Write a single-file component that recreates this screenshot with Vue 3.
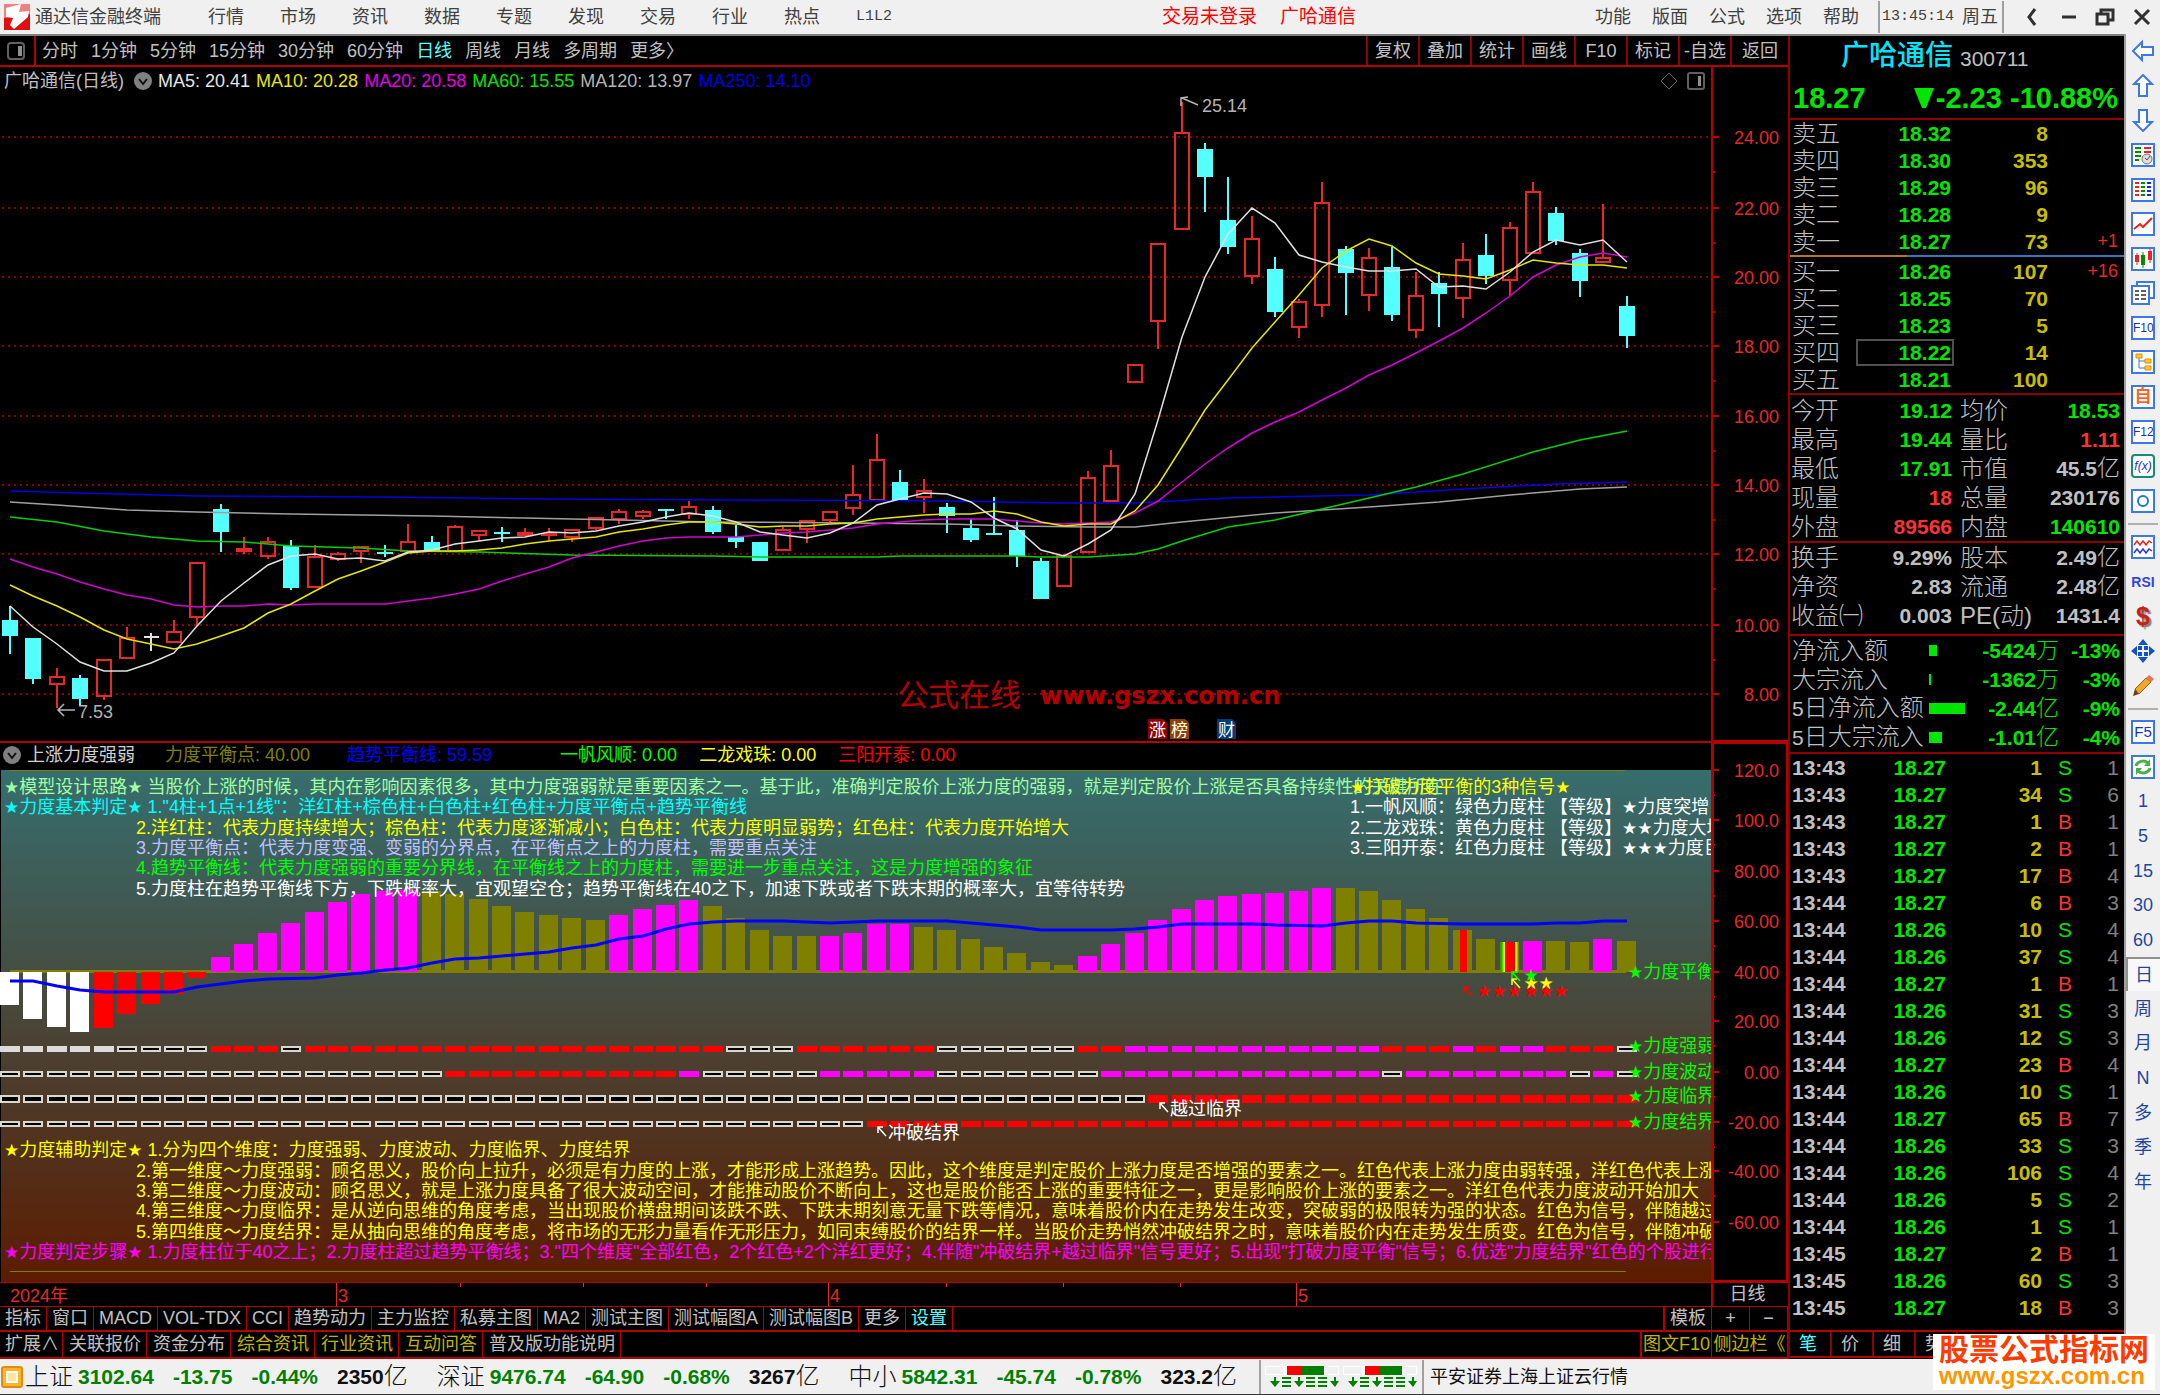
<script setup>
const menu = ['行情', '市场', '资讯', '数据', '专题', '发现', '交易', '行业', '热点', 'L1L2']
const sysMenu = ['功能', '版面', '公式', '选项', '帮助']
const periods = ['分时', '1分钟', '5分钟', '15分钟', '30分钟', '60分钟', '日线', '周线', '月线', '多周期', '更多〉']
const chartTools = ['复权', '叠加', '统计', '画线', 'F10', '标记', '-自选', '返回']

const STEP = 23.43
const cx = (i) => Math.round(10 + i * STEP)

// direction, high, body top, body bottom, low
const candleRows = `d 606 620 636 654|d 638 638 679 684|u 668 677 684 708|d 675 678 699 706|u 659 660 696 700|u 627 638 658 658|w 633 637 637 651|u 620 632 642 642|u 563 563 617 626|d 504 509 532 552
u 537 549 551 554|u 537 542 556 559|d 540 546 588 590|u 545 557 587 587|u 552 554 559 561|u 547 547 551 563|d 545 552 553 557|u 524 542 551 551|d 536 542 551 551|u 525 527 551 551
u 531 531 535 541|d 527 532 534 542|u 528 533 535 535|u 528 534 535 541|u 530 530 537 542|u 518 518 528 530|u 509 512 519 524|u 510 512 516 519|d 509 509 511 519|u 501 507 514 519
d 506 510 532 534|d 525 537 542 548|d 542 542 561 561|u 527 530 550 550|u 521 521 529 543|u 512 512 520 523|u 465 495 508 515|u 434 460 500 500|d 470 482 500 500|u 479 491 497 513
d 503 507 516 533|d 519 528 540 542|d 497 533 534 535|d 520 530 556 567|d 558 561 599 599|u 554 556 586 586|u 471 478 552 552|u 450 466 501 501|u 365 365 382 382|u 244 244 321 349
u 102 133 229 229|d 143 149 177 212|d 177 220 247 254|u 216 239 276 284|d 257 269 312 317|u 299 302 327 338|u 182 203 305 317|d 246 249 273 315|u 248 258 295 311|d 247 267 315 321
u 272 296 330 338|d 272 283 294 327|u 243 260 298 318|d 234 255 276 284|u 222 228 280 296|u 182 192 253 253|d 207 213 241 245|d 249 253 281 297|u 204 258 262 262|d 296 306 336 348`
const candles = candleRows.split(/[|\n]/).map((row, i) => {
  const [dir, high, top, bottom, low] = row.split(' ')
  return { x: cx(i), dir, high: +high, top: +top, bottom: +bottom, low: +low }
})

const dense = (list) => list.split(' ').map((y, i) => `${cx(i)},${y}`).join(' ')
const sparse = (list) => list.split(' ').map((p) => { const [i, y] = p.split(':'); return `${cx(+i)},${y}` }).join(' ')
const averages = [
  { color: '#0000e6', points: sparse('0:491 3:493 8:496 16:497 23:499 31:500 40:501 45:503 48:503 52:498 58:495 62:489 66:484 69:482') },
  { color: '#a0a0a0', points: sparse('0:502 2:505 5:510 8:512 12:514 18:516 22:518 26:520 30:522 36:523 40:524 43:526 46:527 48:527 50:522 54:513 58:507 61:502 64:495 67:489 69:487') },
  { color: '#00d200', points: sparse('0:517 2:522 4:531 6:537 8:541 10:542 12:546 15:548 17:551 20:552 24:555 30:556 32:557 37:557 38:556 43:556 44:557 46:557 48:554 49:549 50:541 52:527 54:520 56:509 58:498 60:487 62:474 65:452 67:440 69:431') },
  { color: '#d400d4', points: dense('559 567 574 582 589 595 599 605 607 606 606 604 605 604 604 604 604 601 598 594 589 581 574 567 558 552 546 541 538 537 537 537 535 533 532 530 528 524 522 520 519 519 519 521 523 524 523 522 513 501 482 464 448 433 422 412 400 388 375 365 353 341 328 313 296 277 265 257 253 257') },
  { color: '#e6e600', points: dense('585 596 606 617 630 639 644 649 644 636 628 613 604 591 579 571 562 553 551 551 550 548 544 541 539 537 532 529 525 522 522 524 527 526 526 524 523 519 517 515 514 514 511 514 522 526 524 524 511 485 447 410 380 348 322 295 268 251 239 246 263 274 276 279 270 260 263 265 265 268') },
  { color: '#e0e0e0', points: dense('606 627 644 662 671 671 663 653 626 601 583 565 556 554 559 558 561 552 550 544 541 538 537 532 533 531 526 522 517 513 516 522 532 535 538 533 523 505 499 493 494 502 518 529 550 556 544 530 494 420 337 277 234 208 223 255 262 267 271 271 269 287 286 289 272 252 240 245 240 262') },
]
const priceAxis = [[24, 137], [22, 208], [20, 277], [18, 346], [16, 416], [14, 485], [12, 554], [10, 625], [8, 694]].map(([v, y]) => ({ label: v.toFixed(2), y }))
const forceAxis = [['120.0', 770], ['100.0', 820], ['80.00', 871], ['60.00', 921], ['40.00', 972], ['20.00', 1021], ['0.00', 1072], ['-20.00', 1122], ['-40.00', 1171], ['-60.00', 1222]].map(([label, y]) => ({ label, y }))

const legend = [
  ['MA5: 20.41', '#e6e6e6'], ['MA10: 20.28', '#e6e600'], ['MA20: 20.58', '#e600e6'],
  ['MA60: 15.55', '#00e600'], ['MA120: 13.97', '#b4b4b4'], ['MA250: 14.10', '#0000e6'],
]
const forceLegend = [
  ['力度平衡点: 40.00', '#808000', 'lead'], ['趋势平衡线: 59.59', '#0000ff', 'lead'], ['一帆风顺: 0.00', '#00ff00', 'far'],
  ['二龙戏珠: 0.00', '#ffff00', ''], ['三阳开泰: 0.00', '#ff0000', ''],
]

const BASE = 972
const shade = { W: '#ffffff', R: '#ff0000', M: '#ff00ff', O: '#808000', K: '#000000', G: '#dcdcdc' }
const barKinds = 'WWWW' + 'R'.repeat(5) + 'M'.repeat(9) + 'O'.repeat(8) + 'MMMM' + 'OOOOO' + 'MMMM' + 'O'.repeat(7) + 'M'.repeat(11) + 'O'.repeat(8) + 'MOOMO'
const bars = '1005 1019 1027 1032 1028 1014 1004 994 978 957 944 933 923 912 902 894 891 890 891 894 899 906 912 915 918 920 915 909 905 900 906 918 930 936 936 936 933 924 924 927 930 939 947 953 962 965 956 944 933 920 909 900 896 894 893 891 888 888 891 900 909 918 930 939 942 941 941 942 939 941'
  .split(' ').map((v, i) => ({ x: cx(i) - 10, y: Math.min(+v, BASE), h: Math.abs(BASE - v), fill: shade[barKinds[i]] }))
const trend = sparse('0:981 1:981 2:986 3:990 4:992 7:992 8:987 9:984 10:981 11:979 13:978 14:975 15:973 16:970 17:968 18:963 19:959 20:958 21:956 22:954 23:952 24:948 25:945 26:939 27:936 28:929 29:924 30:922 31:921 33:921 34:922 35:923 37:921 40:921 41:923 42:925 43:927 44:930 47:930 48:929 49:927 50:924 53:924 54:925 56:926 57:923 58:921 59:921 60:923 62:924 65:924 66:923 67:923 68:921 69:921')

const run = (spec) => spec.split(' ').map((s) => s[0].repeat(+s.slice(1))).join('')
const strips = [
  { y: 1046, h: 6, kinds: run('G5 K4 R3 K1 R18 K3 R6 K6 R2 M11 R3 M1 R1 M2 R3 K1') },
  { y: 1071, h: 6, kinds: run('K19 R10 M1 K5 M5 K7 M12 K1 M7 K1 M1 K1') },
  { y: 1095, h: 8, kinds: run('K49 R21') },
  { y: 1121, h: 6, kinds: run('K37 R33') },
]
const cells = strips.flatMap((s) => [...s.kinds].map((k, i) => {
  const inset = k === 'K' ? 1 : 0
  return { x: cx(i) - 10 + inset, y: s.y + inset, w: 20 - 2 * inset, h: s.h - 2 * inset, fill: shade[k], line: inset ? '#d8d8d0' : 'none' }
}))

const split = (text) => text.split(/(★+)/).filter(Boolean).map((t) => ({ t, star: t[0] === '★' }))
const notes = [
  [4, 787, '#a0ffa0', '★模型设计思路★ 当股价上涨的时候，其内在影响因素很多，其中力度强弱就是重要因素之一。基于此，准确判定股价上涨力度的强弱，就是判定股价上涨是否具备持续性的关键所在'],
  [4, 807, '#00ffff', '★力度基本判定★ 1."4柱+1点+1线"：洋红柱+棕色柱+白色柱+红色柱+力度平衡点+趋势平衡线'],
  [136, 828, '#ffff00', '2.洋红柱：代表力度持续增大；棕色柱：代表力度逐渐减小；白色柱：代表力度明显弱势；红色柱：代表力度开始增大'],
  [136, 848, '#c0c0ff', '3.力度平衡点：代表力度变强、变弱的分界点，在平衡点之上的力度柱，需要重点关注'],
  [136, 868, '#00ff00', '4.趋势平衡线：代表力度强弱的重要分界线，在平衡线之上的力度柱，需要进一步重点关注，这是力度增强的象征'],
  [136, 889, '#ffffff', '5.力度柱在趋势平衡线下方，下跌概率大，宜观望空仓；趋势平衡线在40之下，加速下跌或者下跌末期的概率大，宜等待转势'],
  [1350, 787, '#ffff00', '★打破力度平衡的3种信号★'],
  [1350, 807, '#ffffff', '1.一帆风顺：绿色力度柱 【等级】★力度突增'],
  [1350, 828, '#ffffff', '2.二龙戏珠：黄色力度柱 【等级】★★力度大增'],
  [1350, 848, '#ffffff', '3.三阳开泰：红色力度柱 【等级】★★★力度巨增'],
  [1628, 972, '#00ff00', '★力度平衡'],
  [1628, 1046, '#00ff00', '★力度强弱'],
  [1628, 1072, '#00ff00', '★力度波动'],
  [1628, 1096, '#00ff00', '★力度临界'],
  [1628, 1122, '#00ff00', '★力度结界'],
  [1170, 1109, '#ffffff', '越过临界'],
  [888, 1133, '#ffffff', '冲破结界'],
  [4, 1150, '#ffff00', '★力度辅助判定★ 1.分为四个维度：力度强弱、力度波动、力度临界、力度结界'],
  [136, 1171, '#ffff00', '2.第一维度～力度强弱：顾名思义，股价向上拉升，必须是有力度的上涨，才能形成上涨趋势。因此，这个维度是判定股价上涨力度是否增强的要素之一。红色代表上涨力度由弱转强，洋红色代表上涨'],
  [136, 1191, '#ffff00', '3.第二维度～力度波动：顾名思义，就是上涨力度具备了很大波动空间，才能推动股价不断向上，这也是股价能否上涨的重要特征之一，更是影响股价上涨的要素之一。洋红色代表力度波动开始加大'],
  [136, 1211, '#ffff00', '4.第三维度～力度临界：是从逆向思维的角度考虑，当出现股价横盘期间该跌不跌、下跌末期刻意无量下跌等情况，意味着股价内在走势发生改变，突破弱的极限转为强的状态。红色为信号，伴随越过'],
  [136, 1232, '#ffff00', '5.第四维度～力度结界：是从抽向思维的角度考虑，将市场的无形力量看作无形压力，如同束缚股价的结界一样。当股价走势悄然冲破结界之时，意味着股价内在走势发生质变。红色为信号，伴随冲破'],
  [4, 1252, '#ff00ff', '★力度判定步骤★ 1.力度柱位于40之上；2.力度柱超过趋势平衡线；3."四个维度"全部红色，2个红色+2个洋红更好；4.伴随"冲破结界+越过临界"信号更好；5.出现"打破力度平衡"信号；6.优选"力度结界"红色的个股进行'],
].map(([x, y, color, text]) => ({ x, y: y + 6, color, parts: split(text) }))
const arrows = [[1160, 1103, '#ffffff'], [878, 1127, '#ffffff'], [1464, 987, '#ff0000'], [1512, 979, '#ffff00'], [1512, 972, '#00ff00']]
const signalStars = [[1531, 975, '#00ff00'], [1531, 983, '#ffff00'], [1546, 983, '#ffff00'], ...[1484, 1499, 1514, 1531, 1546, 1561].map((x) => [x, 991, '#ff0000'])]

const months = [[337, '3'], [829, '4'], [1297, '5']]
const weekTicks = [460, 583, 706, 946, 1063, 1180]
const indicatorTabs = ['指标', '窗口', 'MACD', 'VOL-TDX', 'CCI', '趋势动力', '主力监控', '私募主图', 'MA2', '测试主图', '测试幅图A', '测试幅图B', '更多', '设置']
const extraTabs = [['扩展∧'], ['关联报价'], ['资金分布'], ['综合资讯', 1], ['行业资讯', 1], ['互动问答', 1], ['普及版功能说明']]

const asks = [['卖五', '18.32', '8', ''], ['卖四', '18.30', '353', ''], ['卖三', '18.29', '96', ''], ['卖二', '18.28', '9', ''], ['卖一', '18.27', '73', '+1']]
const bids = [['买一', '18.26', '107', '+16'], ['买二', '18.25', '70', ''], ['买三', '18.23', '5', ''], ['买四', '18.22', '14', ''], ['买五', '18.21', '100', '']]
const stats = [
  [['今开', '19.12', 'g', '均价', '18.53', 'g'], ['最高', '19.44', 'g', '量比', '1.11', 'r'], ['最低', '17.91', 'g', '市值', '45.5亿', 'n'], ['现量', '18', 'r', '总量', '230176', 'n'], ['外盘', '89566', 'r', '内盘', '140610', 'g']],
  [['换手', '9.29%', 'n', '股本', '2.49亿', 'n'], ['净资', '2.83', 'n', '流通', '2.48亿', 'n'], ['收益㈠', '0.003', 'n', 'PE(动)', '1431.4', 'n']],
]
const flows = [['净流入额', 8, '-5424', '万', '-13%'], ['大宗流入', 2, '-1362', '万', '-3%'], ['5日净流入额', 36, '-2.44', '亿', '-9%'], ['5日大宗流入', 13, '-1.01', '亿', '-4%']]
const trades = `13:43 18.27 1 S 1|13:43 18.27 34 S 6|13:43 18.27 1 B 1|13:43 18.27 2 B 1|13:43 18.27 17 B 4|13:44 18.27 6 B 3|13:44 18.26 10 S 4|13:44 18.26 37 S 4|13:44 18.27 1 B 1|13:44 18.26 31 S 3|13:44 18.26 12 S 3|13:44 18.27 23 B 4|13:44 18.26 10 S 1|13:44 18.27 65 B 7|13:44 18.26 33 S 3|13:44 18.26 106 S 4|13:44 18.26 5 S 2|13:44 18.26 1 S 1|13:45 18.27 2 B 1|13:45 18.26 60 S 3|13:45 18.27 18 B 3`
  .split('|').map((r) => r.split(' '))
const quoteTabs = ['笔', '价', '细', '势']
const indices = [
  ['上证', '3102.64', '-13.75', '-0.44%', '2350'],
  ['深证', '9476.74', '-64.90', '-0.68%', '3267'],
  ['中小', '5842.31', '-45.74', '-0.78%', '323.2'],
]
const sideTexts = ['1', '5', '15', '30', '60', '日', '周', '月', 'N', '多', '季', '年']
</script>

<template>
  <div class="terminal">
    <header class="topbar">
      <svg class="logo" viewBox="0 0 26 26" aria-hidden="true">
        <rect width="26" height="26" fill="#e01010" /><path d="M0 0H26V10L0 14Z" fill="#f08080" />
        <path d="M2 4L17 0 15 8 25 7 24 13 10 25 6 21 9 14 2 13Z" fill="#fff" />
      </svg>
      <h1>通达信金融终端</h1>
      <nav class="menu"><button v-for="m in menu" :key="m" :class="{ mono: m === 'L1L2' }">{{ m }}</button></nav>
      <div class="login"><button>交易未登录</button><button>广哈通信</button></div>
      <nav class="sysmenu"><button v-for="m in sysMenu" :key="m">{{ m }}</button></nav>
      <div class="clock"><time class="mono">13:45:14</time><span>周五</span></div>
      <div class="winctl">
        <button aria-label="后退"><svg viewBox="0 0 20 20"><path d="M13 2L7 10L13 18" /></svg></button>
        <button aria-label="最小化"><svg viewBox="0 0 20 20"><path d="M3 10H17" /></svg></button>
        <button aria-label="还原"><svg viewBox="0 0 20 20"><path d="M2 7H13V17H2ZM6 7V3H18V13H13" /></svg></button>
        <button aria-label="关闭"><svg viewBox="0 0 20 20"><path d="M3 3L17 17M17 3L3 17" /></svg></button>
      </div>
    </header>

    <div class="body">
      <main class="market">
        <div class="periodbar">
          <button class="panebtn" aria-label="侧栏"><svg width="18" height="18" viewBox="0 0 18 18"><rect x="1" y="1" width="16" height="16" rx="3" fill="none" stroke="#606060" stroke-width="2" /><rect x="11" y="4" width="4" height="10" fill="#909090" /></svg></button>
          <nav class="periods"><button v-for="p in periods" :key="p" :class="{ on: p === '日线' }">{{ p }}</button></nav>
          <div class="charttools"><button v-for="t in chartTools" :key="t">{{ t }}</button></div>
        </div>

        <div class="charts">
          <div class="plots">
            <div class="legend">
              <span class="title">广哈通信(日线)</span>
              <svg class="drop" viewBox="0 0 18 18"><circle cx="9" cy="9" r="9" fill="#808080" /><path d="M5 7L9 12L13 7" fill="none" stroke="#101010" stroke-width="2" /></svg>
              <span v-for="l in legend" :key="l[0]" :style="{ color: l[1] }">{{ l[0] }}</span>
              <svg class="corner" width="44" height="18" viewBox="0 0 44 18" fill="none" stroke="#606060"><path d="M8 1L16 9L8 17L0 9Z" /><rect x="27" y="1" width="16" height="16" rx="2" stroke-width="2" /><rect x="37" y="4" width="3" height="10" fill="#909090" stroke="none" /></svg>
            </div>
            <svg class="kplot" viewBox="0 95 1711 646" preserveAspectRatio="xMaxYMin slice">
              <line v-for="a in priceAxis" :key="a.y" x1="2" x2="1711" :y1="a.y" :y2="a.y" stroke="#900000" stroke-width="2" stroke-dasharray="2 4" />
              <g v-for="c in candles" :key="c.x" shape-rendering="crispEdges">
                <template v-if="c.dir === 'd'">
                  <rect :x="c.x - 1" :y="c.high" width="2" :height="c.low - c.high" fill="#54ffff" />
                  <rect :x="c.x - 8" :y="c.top" width="16" :height="Math.max(2, c.bottom - c.top)" fill="#54ffff" />
                </template>
                <template v-else-if="c.dir === 'u'">
                  <rect :x="c.x - 1" :y="c.high" width="2" :height="c.top - c.high" fill="#e62828" />
                  <rect :x="c.x - 1" :y="c.bottom" width="2" :height="c.low - c.bottom" fill="#e62828" />
                  <rect :x="c.x - 7" :y="c.top" width="14" :height="c.bottom - c.top" fill="none" stroke="#e62828" stroke-width="2" />
                </template>
                <path v-else :d="`M${c.x - 7} 637h15M${c.x} 633v18`" stroke="#e0e0e0" stroke-width="2" />
              </g>
              <polyline v-for="m in averages" :key="m.color" :points="m.points" fill="none" :stroke="m.color" stroke-width="1.5" />
              <g fill="none" stroke="#b4b4b4" stroke-width="1.5">
                <path d="M75 710H58M64 704L58 710L64 716M1198 105L1182 98M1181 106V98L1188 97" />
              </g>
              <text x="78" y="718" fill="#b4b4b4">7.53</text>
              <text x="1202" y="112" fill="#b4b4b4">25.14</text>
              <text class="brandcn" x="897" y="706">公式在线</text>
              <text class="brand" x="1040" y="704">www.gszx.com.cn</text>
              <g class="badge">
                <path d="M1148 719h15l4 4v16h-19z" fill="#900000" /><text x="1149" y="736">涨</text>
                <path d="M1170 719h15l4 4v16h-19z" fill="#904000" /><text x="1171" y="736">榜</text>
                <path d="M1217 719h15l4 4v16h-19z" fill="#003c78" /><text x="1218" y="736">财</text>
              </g>
            </svg>
            <div class="legend force">
              <svg class="drop" viewBox="0 0 18 18"><circle cx="9" cy="9" r="9" fill="#808080" /><path d="M5 7L9 12L13 7" fill="none" stroke="#101010" stroke-width="2" /></svg>
              <span class="name">上涨力度强弱</span>
              <span v-for="l in forceLegend" :key="l[0]" :class="l[2]" :style="{ color: l[1] }">{{ l[0] }}</span>
            </div>
            <svg class="fplot" viewBox="0 770 1711 512" preserveAspectRatio="xMaxYMin slice">
              <defs><linearGradient id="dusk" x1="0" y1="0" x2="0" y2="1"><stop offset="0" stop-color="#366e6e" /><stop offset="1" stop-color="#5c1c00" /></linearGradient></defs>
              <rect x="1" y="770" width="1710" height="512" fill="url(#dusk)" />
              <g fill="#808000"><rect x="10" y="770" width="1616" height="1" /><rect x="10" y="970" width="1616" height="3" /><rect x="10" y="1271" width="1616" height="1" /></g>
              <rect v-for="b in bars" :key="b.x" :x="b.x" :y="b.y" width="19" :height="b.h" :fill="b.fill" />
              <rect x="1460" y="930" width="7" height="42" fill="#ff0000" />
              <g><rect x="1502" y="942" width="16" height="30" fill="#00ff00" /><rect x="1503" y="942" width="14" height="30" fill="#ffff00" /><rect x="1505" y="942" width="10" height="30" fill="#ff0000" /></g>
              <polyline :points="trend" fill="none" stroke="#0000ff" stroke-width="3" />
              <rect v-for="c in cells" :key="c.x + '-' + c.y" :x="c.x" :y="c.y" :width="c.w" :height="c.h" :fill="c.fill" :stroke="c.line" stroke-width="2" />
              <path v-for="a in arrows" :key="a[0] + '-' + a[1]" :d="`M${a[0] + 8} ${a[1] + 9}L${a[0]} ${a[1]}M${a[0]} ${a[1] + 6}V${a[1]}H${a[0] + 5}`" fill="none" :stroke="a[2]" stroke-width="1.5" />
              <text v-for="s in signalStars" :key="s[0] + '-' + s[1]" class="star" text-anchor="middle" :x="s[0]" :y="s[1] + 6" :fill="s[2]">★</text>
              <text v-for="n in notes" :key="n.x + '-' + n.y" :x="n.x" :y="n.y" :fill="n.color"><tspan v-for="(p, k) in n.parts" :key="k" :class="{ star: p.star }">{{ p.t }}</tspan></text>
            </svg>
          </div>

          <svg class="axis" viewBox="1711 67 77 1215" preserveAspectRatio="xMinYMin slice">
            <g fill="none" stroke="#b40000" stroke-width="2"><path d="M1712 67V1282M1711 741H1788M1713 743H1787V1281H1713Z" />
              <path v-for="a in [...priceAxis, ...forceAxis]" :key="a.y" :d="`M1712 ${a.y}h7`" />
              <path v-for="a in [...priceAxis, ...forceAxis]" :key="'m' + a.y" v-show="a.y !== 694 && a.y < 1222" :d="`M1712 ${a.y + (a.y < 741 ? 35 : 25)}h3`" />
            </g>
            <text v-for="a in [...priceAxis, ...forceAxis]" :key="a.label + a.y" text-anchor="end" x="1779" :y="a.y + 7" fill="#e62828">{{ a.label }}</text>
          </svg>
        </div>

        <div class="dates">
          <svg viewBox="0 1282 1711 24" preserveAspectRatio="xMaxYMin slice">
            <text x="10" y="1301">2024年</text>
            <g v-for="m in months" :key="m[0]"><rect :x="m[0] - 1" y="1282" width="1" height="24" /><text :x="m[0] + 1" y="1301">{{ m[1] }}</text></g>
            <rect v-for="t in weekTicks" :key="t" :x="t" y="1282" width="1" height="4" />
          </svg>
          <span class="cycle">日线</span>
        </div>

        <div class="tabrow">
          <button v-for="t in indicatorTabs" :key="t" :class="{ on: t === '设置' }">{{ t }}</button>
          <button class="push">模板</button><button class="half" aria-label="放大">+</button><button class="half" aria-label="缩小">−</button>
        </div>
        <div class="tabrow lower">
          <button v-for="t in extraTabs" :key="t[0]" :class="{ gold: t[1] }">{{ t[0] }}</button>
          <button class="push gold doc">图文F10</button><button class="gold fold">侧边栏《</button>
        </div>
      </main>

      <aside class="quote">
        <h2><strong>广哈通信</strong><span>300711</span></h2>
        <p class="last"><span>18.27</span><span class="chg"><svg width="20" height="20" viewBox="0 0 20 20"><path d="M0 0H20L12 20H8Z" fill="#00e600" /></svg>-2.23</span><span>-10.88%</span></p>
        <table class="book">
          <tbody><tr v-for="r in asks" :key="r[0]"><th>{{ r[0] }}</th><td class="g">{{ r[1] }}</td><td class="y">{{ r[2] }}</td><td class="delta">{{ r[3] }}</td></tr></tbody>
        </table>
        <div class="ratio"></div>
        <table class="book bidside">
          <tbody><tr v-for="r in bids" :key="r[0]"><th>{{ r[0] }}</th><td class="g" :class="{ boxed: r[1] === '18.22' }">{{ r[1] }}</td><td class="y">{{ r[2] }}</td><td class="delta">{{ r[3] }}</td></tr></tbody>
        </table>
        <dl v-for="(g, k) in stats" :key="k" class="stats">
          <template v-for="r in g" :key="r[0]">
            <div><dt>{{ r[0] }}</dt><dd :class="r[2]">{{ r[1] }}</dd></div>
            <div><dt>{{ r[3] }}</dt><dd :class="r[5]">{{ r[4].replace('亿', '') }}<i v-if="r[4].includes('亿')">亿</i></dd></div>
          </template>
        </dl>
        <div class="flows">
          <div v-for="f in flows" :key="f[0]"><span class="cap"><b v-if="f[0][0] === '5'">5</b>{{ f[0].replace('5', '') }}</span><span class="meter"><i :style="{ width: f[1] + 'px' }"></i></span><span class="amt">{{ f[2] }}<i>{{ f[3] }}</i></span><span class="pct">{{ f[4] }}</span></div>
        </div>
        <table class="ticks">
          <tbody><tr v-for="(t, i) in trades" :key="i"><td>{{ t[0] }}</td><td class="g">{{ t[1] }}</td><td class="y">{{ t[2] }}</td><td :class="t[3] === 'S' ? 'sell' : 'buy'">{{ t[3] }}</td><td class="cnt">{{ t[4] }}</td></tr></tbody>
        </table>
        <nav class="quotetabs"><button v-for="t in quoteTabs" :key="t" :class="{ on: t === '笔' }">{{ t }}</button></nav>
      </aside>

      <nav class="strip">
        <div class="group g14">
          <button aria-label="返回"><svg viewBox="0 0 24 24" class="arrow"><path d="M2 12L11 3V8H22V16H11V21Z" /></svg></button>
          <button aria-label="上翻"><svg viewBox="0 0 24 24" class="arrow"><path d="M12 1L21 10H16V22H8V10H3Z" /></svg></button>
          <button aria-label="下翻"><svg viewBox="0 0 24 24" class="arrow"><path d="M12 23L21 14H16V2H8V14H3Z" /></svg></button>
          <button aria-label="分时"><svg viewBox="0 0 24 24"><rect class="frame" x="1" y="1" width="22" height="22" /><path d="M4 5h6M4 9h6M4 13h6M4 17h4" stroke="#008c00" stroke-width="2" /><path d="M13 5h7M13 9h7" stroke="#f02020" stroke-width="2" /><circle cx="16" cy="16" r="5" fill="#ddd" stroke="#707070" /><path d="M14 15l2 2 3-4" stroke="#505050" fill="none" /></svg></button>
          <button aria-label="行情表"><svg viewBox="0 0 24 24"><rect class="frame" x="1" y="1" width="22" height="22" /><g stroke-width="4" stroke-dasharray="2 2"><path d="M6 4V20" stroke="#f02020" /><path d="M12 4V20" stroke="#008c00" /><path d="M18 4V20" stroke="#2020f0" /></g></svg></button>
          <button aria-label="走势图"><svg viewBox="0 0 24 24"><rect class="frame" x="1" y="1" width="22" height="22" /><path d="M3 17L9 12L12 15L21 6" stroke="#f02020" stroke-width="2" fill="none" /></svg></button>
          <button aria-label="K线图"><svg viewBox="0 0 24 24"><rect class="frame" x="1" y="1" width="22" height="22" /><path d="M6 6V18M19 2V16" stroke="#f02020" /><path d="M12 5V21" stroke="#008c00" /><path d="M4 8h4v7H4zM17 4h4v9H17z" fill="#f02020" /><path d="M10 8h4v10H10z" fill="#008c00" /></svg></button>
          <button aria-label="资讯"><svg viewBox="0 0 24 24"><path class="frame" d="M6 5V1H23V17H19" /><rect class="frame" x="1" y="5" width="17" height="18" /><path d="M4 10h4M10 10h5M4 14h4M10 14h5M4 18h4M10 18h5" stroke="#606060" stroke-width="2" /></svg></button>
          <button class="txt">F10</button>
          <button aria-label="板块"><svg viewBox="0 0 24 24"><rect class="frame" x="1" y="1" width="22" height="22" /><path d="M8 7V18H14M8 11H14" stroke="#3c78e6" fill="none" /><g fill="#ffc828" stroke="#e09000"><path d="M5 4h6v4H5zM14 9h6v4h-6zM14 16h6v4h-6z" /></g></svg></button>
          <button class="txt own">自</button>
          <button class="txt">F12</button>
          <button class="txt fx">f(x)</button>
          <button aria-label="圆圈"><svg viewBox="0 0 24 24"><rect class="frame" x="1" y="1" width="22" height="22" /><circle cx="12" cy="12" r="5" fill="none" stroke="#1e78c8" stroke-width="2" /></svg></button>
        </div>
        <hr>
        <div class="group g5">
          <button aria-label="多图"><svg viewBox="0 0 24 24"><rect class="frame" x="1" y="1" width="22" height="22" /><path d="M3 10L6 6L9 10L12 6L15 10L18 6L21 8" stroke="#f02020" fill="none" stroke-width="1.5" /><path d="M3 18L6 14L9 18L12 14L15 18L18 14L21 16" stroke="#3030f0" fill="none" stroke-width="1.5" /></svg></button>
          <button class="rsi">RSI</button>
          <button class="dollar">$</button>
          <button aria-label="移动"><svg viewBox="0 0 24 24" fill="#1450c8"><path d="M12 0L17 6H7ZM12 24L7 18H17ZM0 12L6 7V17ZM24 12L18 17V7Z" /><path d="M7 7h4v4H7zM13 7h4v4h-4zM7 13h4v4H7zM13 13h4v4h-4z" /></svg></button>
          <button aria-label="画笔"><svg viewBox="0 0 24 24"><path d="M2 22L4 15L8 20Z" fill="#604020" /><path d="M4 15L15 4L20 8L8 20Z" fill="#f0a828" stroke="#906010" /><path d="M15 4L18 1L23 5L20 8Z" fill="#f07060" /></svg></button>
        </div>
        <hr>
        <div class="group g14">
          <button class="txt five">F5</button>
          <button aria-label="刷新"><svg viewBox="0 0 24 24"><rect class="frame" x="1" y="1" width="22" height="22" /><path d="M5 11A7 6 0 0 1 17 8M19 13A7 6 0 0 1 7 16" fill="none" stroke="#48b048" stroke-width="3" /><path d="M19 4V11H13ZM5 20V13H11Z" fill="#48b048" /></svg></button>
          <button v-for="t in sideTexts" :key="t" class="cyc" :class="{ on: t === '日' }">{{ t }}</button>
        </div>
      </nav>
    </div>

    <footer class="status">
      <svg class="app" viewBox="0 0 22 22"><rect x="1" y="1" width="20" height="20" rx="2" fill="#ffb428" stroke="#e08c10" stroke-width="2" /><rect x="6" y="6" width="10" height="10" fill="#ffe6a0" stroke="#fff" stroke-width="2" /></svg>
      <div v-for="x in indices" :key="x[0]" class="index"><i>{{ x[0] }}</i><b>{{ x[1] }}</b><b>{{ x[2] }}</b><b>{{ x[3] }}</b><span>{{ x[4] }}<i>亿</i></span></div>
      <div class="breadth">
        <svg v-for="n in 2" :key="n" viewBox="0 0 74 22"><rect width="74" height="9" fill="#fff" /><rect x="1" y="1" width="17" height="7" fill="#f0f0f0" /><rect x="22" width="14" height="9" fill="#f00" /><rect x="36" width="23" height="9" fill="#008000" /><rect x="61" y="1" width="12" height="7" fill="#f0f0f0" />
          <g id="marks"><path d="M10 11V20M34 11V20M70 11V20M17 12h9M17 16h9M17 20h9M41 12h9M41 16h9M41 20h9M53 12h9M53 16h9M53 20h9" fill="none" stroke="#008000" stroke-width="2" /><path d="M5 15H15L10 21ZM29 15H39L34 21ZM65 15H74L70 21Z" fill="#008000" /></g></svg>
      </div>
      <span class="server">平安证券上海上证云行情</span>
    </footer>
    <div class="stamp"><strong>股票公式指标网</strong><span>www.gszx.com.cn</span></div>
  </div>
</template>

<style>
body { margin: 0; background: #000; }
</style>

<style scoped>
* { box-sizing: border-box; }
.terminal { position: relative; min-height: 100vh; display: flex; flex-direction: column; background: #000; color: #c0c0c0; font: 18px/24px "Liberation Sans", "Noto Sans CJK SC", sans-serif; white-space: nowrap; }
button { font: inherit; color: inherit; background: none; border: 0; padding: 0; margin: 0; white-space: nowrap; }
h1, h2, p, dl, dd { margin: 0; font-weight: inherit; }
svg { display: block; }
i { font-style: normal; }
.mono { font-family: "Liberation Mono", monospace; font-size: 15px; }

.topbar { height: 36px; display: flex; align-items: center; background: #f0f0f0; color: #404040; border-bottom: 2px solid #808080; }
.logo { width: 26px; height: 26px; margin-left: 4px; }
.topbar h1 { font-size: 18px; margin-left: 5px; width: 173px; }
.menu { display: flex; gap: 36px; }
.login { display: flex; gap: 23px; margin-left: auto; margin-right: 239px; color: #f00; font-size: 19px; }
.sysmenu { display: flex; gap: 21px; margin-right: 19px; }
.clock { height: 32px; width: 126px; display: flex; align-items: center; justify-content: space-between; padding: 0 4px 0 2px; border: solid #a0a0a0; border-width: 0 2px; }
.winctl { display: flex; width: 156px; padding-left: 10px; }
.winctl button { flex: 1; display: flex; justify-content: center; }
.winctl svg { width: 20px; height: 20px; fill: none; stroke: #303030; stroke-width: 3; }

.body { flex: 1; display: grid; grid-template-columns: minmax(0, 1fr) 336px 36px; }
.market { display: flex; flex-direction: column; min-width: 0; }
.periodbar { height: 31px; display: flex; border-bottom: 2px solid #b40000; }
.panebtn { width: 36px; padding-left: 7px; border-right: 2px solid #b40000; }
.periods { display: flex; gap: 13px; margin-left: 6px; }
.on { color: #54ffff; }
.charttools { display: flex; margin-left: auto; width: 422px; }
.charttools button { flex: 0 0 52px; border-left: 2px solid #900000; }
.charttools button:last-child { flex: 1; }
.charts { display: grid; grid-template-columns: minmax(0, 1fr) 77px; }
.plots { min-width: 0; }
.legend { height: 28px; display: flex; align-items: center; gap: 6px; padding-left: 4px; }
.legend .title { width: 124px; }
.drop { width: 18px; height: 18px; }
.corner { margin-left: auto; margin-right: 6px; }
.force { height: 29px; border-top: 2px solid #b40000; padding: 0 0 3px 3px; gap: 22px; }
.force .name { margin-left: -16px; color: #d0d0d0; }
.lead { margin-left: 8px; }
.lead + .lead { margin-left: 15px; }
.far { margin-left: 46px; }
.kplot { width: 100%; height: 646px; }
.fplot { width: 100%; height: 512px; }
.axis { width: 77px; height: 1215px; }
svg text { font: 18px "Liberation Sans", "Noto Sans CJK SC", sans-serif; }
svg .star { font-family: "DejaVu Sans", sans-serif; font-size: 17px; }
svg .brand { font: bold 24px "DejaVu Sans", sans-serif; fill: #b40000; }
svg .brandcn { font-size: 31px; fill: #b40000; }
.badge text { font-size: 17px; fill: #fff; }
.dates { height: 25px; display: grid; grid-template-columns: minmax(0, 1fr) 77px; border: solid #b40000; border-width: 1px 0; }
.dates svg { width: 100%; height: 23px; fill: #e62828; }
.cycle { border-left: 2px solid #b40000; padding-right: 6px; text-align: center; line-height: 23px; }
.tabrow { height: 25px; display: flex; border-bottom: 2px solid #b40000; }
.tabrow button { padding: 0 5px; border-right: 1px solid #b40000; line-height: 23px; }
.tabrow.lower { height: 27px; }
.tabrow.lower button { padding-left: 6px; line-height: 25px; }
.tabrow.lower button:first-child { padding: 0 3px 0 5px; }
.tabrow .push { margin-left: auto; border-left: 2px solid #b40000; }
.tabrow .half { width: 38px; }
.tabrow.lower .doc { padding: 0 1px; }
.tabrow.lower .fold { width: 76px; padding: 0; }
.gold { color: #c0b400; }

.quote { border-left: 2px solid #900000; }
.quote h2 { height: 40px; display: flex; align-items: center; gap: 7px; padding-left: 51px; font-size: 21px; }
.quote h2 strong { font-size: 28px; font-weight: 500; color: #00e6ff; }
.quote h2 span { padding-top: 6px; }
.last { height: 44px; display: flex; align-items: center; justify-content: space-between; padding: 2px 6px 0 3px; border-bottom: 2px solid #900000; font-size: 29px; font-weight: 700; color: #00e600; }
.last .chg { display: flex; align-items: center; gap: 2px; margin-left: 40px; }
table { border-collapse: collapse; table-layout: fixed; width: 334px; }
th, td { padding: 0; height: 27px; line-height: 27px; font-size: 21px; font-weight: 700; text-align: right; }
th { width: 66px; padding-left: 2px; font-size: 24px; font-weight: 300; text-align: left; }
.g { color: #00e600; }
.r { color: #ff3232; }
.y { color: #c8be00; }
.book .g { width: 98px; padding-right: 3px; }
.book .y { width: 94px; }
.book .delta { padding-right: 6px; color: #e62828; font-size: 18px; font-weight: 400; }
.boxed { box-shadow: inset 0 0 0 2px #505050; }
.ratio { height: 2px; background: linear-gradient(90deg, #b07828 117px, #3278be 117px); }
.bidside { border-bottom: 2px solid #900000; margin-top: 1px; }
.stats { display: grid; grid-template-columns: 161px 160px; column-gap: 8px; padding: 1px 0 0 1px; border-bottom: 2px solid #900000; }
.stats + .stats { padding: 0 0 4px 1px; }
.stats div { display: flex; justify-content: space-between; height: 29px; line-height: 29px; }
.stats dt { font-size: 24px; font-weight: 300; }
.stats dd { font-size: 21px; font-weight: 700; }
.stats i, .amt i { font-size: 23px; font-weight: 300; line-height: 20px; }
.flows { height: 118px; border-bottom: 2px solid #900000; }
.flows div { display: flex; align-items: center; height: 29px; font-size: 21px; font-weight: 700; color: #00e600; }
.flows .cap { width: 139px; padding-left: 2px; font-size: 24px; font-weight: 300; color: #c0c0c0; }
.cap b { font-size: 21px; }
.meter { width: 40px; }
.meter i { display: block; height: 11px; background: #00e600; }
.amt { width: 90px; text-align: right; }
.pct { width: 61px; text-align: right; }
.ticks { margin-bottom: 9px; }
.ticks td:nth-child(1) { width: 58px; text-align: left; padding-left: 2px; }
.ticks td:nth-child(2) { width: 98px; }
.ticks td:nth-child(3) { width: 96px; }
.ticks td:nth-child(4) { width: 46px; text-align: center; font-weight: 400; }
.ticks .sell { color: #00e600; }
.ticks .buy { color: #ff3232; }
.ticks .cnt { color: #808080; font-weight: 400; padding-right: 5px; }
.quotetabs { height: 28px; display: flex; border: solid #b40000; border-width: 2px 0; }
.quotetabs button { width: 42px; border-right: 2px solid #900000; flex: none; padding-right: 4px; }

.strip { background: #f0f0f0; border-left: 2px solid #a0a0a0; margin-top: -2px; }
.group { display: grid; grid-auto-rows: 1fr; justify-items: center; align-items: center; color: #1e46a0; }
.g14 { height: 484px; }
.g5 { height: 173px; }
.strip hr { margin: 5px 2px; border: 0; border-top: 2px solid #b0b0b0; }
.strip svg { width: 24px; height: 24px; }
.strip svg.arrow { fill: #fff; stroke: #3c78e6; stroke-width: 2; }
.frame { fill: #fff; stroke: #3c78e6; stroke-width: 2; }
.txt { width: 24px; height: 24px; border: 2px solid #3c78e6; background: #fff; font-size: 12px; line-height: 20px; color: #1432c8; }
.own { color: #ff6428; font-size: 17px; font-weight: 700; }
.five { font-size: 15px; }
.fx { border-color: #148c78; border-radius: 4px; font-style: italic; font-size: 12px; }
.rsi { font-size: 14px; font-weight: 700; color: #3246dc; }
.dollar { font-size: 25px; font-weight: 700; color: #c82020; text-shadow: 2px 2px 1px #808080; }
.cyc.on { width: 34px; height: 34px; color: #1e46a0; background: #f8f8f8; border: solid #909090; border-width: 2px 0 0 2px; }

.status { height: 36px; display: flex; align-items: center; background: #f0f0f0; color: #101010; border-bottom: 1px solid #303840; font-size: 21px; font-weight: 700; }
.status i { font-size: 24px; font-weight: 300; }
.app { width: 22px; height: 22px; margin: 0 2px 0 1px; }
.index { display: flex; align-items: center; margin-right: 29px; }
.index > i { margin-right: 5px; }
.index b { color: #008000; margin-right: 19px; }
.breadth { display: flex; gap: 4px; height: 34px; align-items: center; margin-left: -7px; padding: 0 5px 0 4px; border: solid #a0a0a0; border-width: 0 2px; }
.breadth svg { width: 74px; height: 22px; }
.server { font-size: 18px; font-weight: 400; margin-left: 6px; }
.stamp { position: absolute; right: 5px; bottom: 5px; width: 222px; height: 56px; padding: 0 6px; background: #fff; display: flex; flex-direction: column; }
.stamp strong { font-size: 30px; line-height: 32px; color: #ff3c00; }
.stamp span { font-size: 24px; line-height: 20px; font-weight: 700; color: #ff9600; }
</style>
